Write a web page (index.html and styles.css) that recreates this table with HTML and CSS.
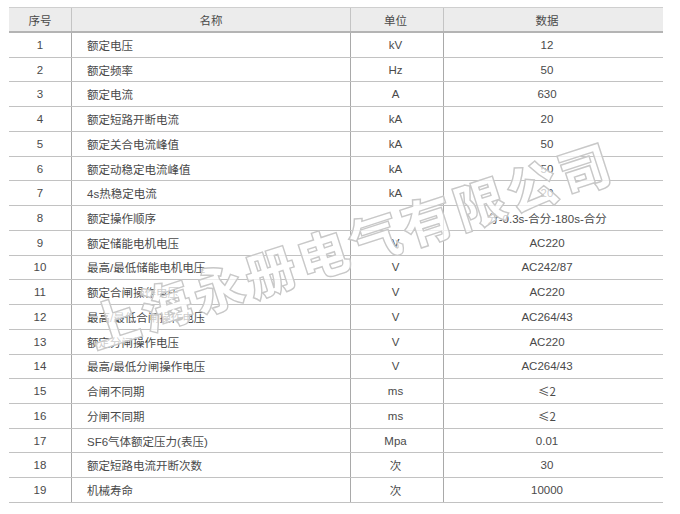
FILE: index.html
```html
<!DOCTYPE html>
<html lang="zh-CN">
<head>
<meta charset="utf-8">
<title>技术参数</title>
<link rel="stylesheet" href="styles.css">
</head>
<body>
<div class="page">
  <div class="table">
    <div class="row head">
      <div class="c seq">序号</div>
      <div class="c name center">名称</div>
      <div class="c unit">单位</div>
      <div class="c data">数据</div>
    </div>
    <div class="row"><div class="c seq">1</div><div class="c name">额定电压</div><div class="c unit">kV</div><div class="c data">12</div></div>
    <div class="row"><div class="c seq">2</div><div class="c name">额定频率</div><div class="c unit">Hz</div><div class="c data">50</div></div>
    <div class="row"><div class="c seq">3</div><div class="c name">额定电流</div><div class="c unit">A</div><div class="c data">630</div></div>
    <div class="row"><div class="c seq">4</div><div class="c name">额定短路开断电流</div><div class="c unit">kA</div><div class="c data">20</div></div>
    <div class="row"><div class="c seq">5</div><div class="c name">额定关合电流峰值</div><div class="c unit">kA</div><div class="c data">50</div></div>
    <div class="row"><div class="c seq">6</div><div class="c name">额定动稳定电流峰值</div><div class="c unit">kA</div><div class="c data">50</div></div>
    <div class="row"><div class="c seq">7</div><div class="c name">4s热稳定电流</div><div class="c unit">kA</div><div class="c data">20</div></div>
    <div class="row"><div class="c seq">8</div><div class="c name">额定操作顺序</div><div class="c unit"></div><div class="c data">分-0.3s-合分-180s-合分</div></div>
    <div class="row"><div class="c seq">9</div><div class="c name">额定储能电机电压</div><div class="c unit">V</div><div class="c data">AC220</div></div>
    <div class="row"><div class="c seq">10</div><div class="c name">最高/最低储能电机电压</div><div class="c unit">V</div><div class="c data">AC242/87</div></div>
    <div class="row"><div class="c seq">11</div><div class="c name">额定合闸操作电压</div><div class="c unit">V</div><div class="c data">AC220</div></div>
    <div class="row"><div class="c seq">12</div><div class="c name">最高/最低合闸操作电压</div><div class="c unit">V</div><div class="c data">AC264/43</div></div>
    <div class="row"><div class="c seq">13</div><div class="c name">额定分闸操作电压</div><div class="c unit">V</div><div class="c data">AC220</div></div>
    <div class="row"><div class="c seq">14</div><div class="c name">最高/最低分闸操作电压</div><div class="c unit">V</div><div class="c data">AC264/43</div></div>
    <div class="row"><div class="c seq">15</div><div class="c name">合闸不同期</div><div class="c unit">ms</div><div class="c data cjk">≤2</div></div>
    <div class="row"><div class="c seq">16</div><div class="c name">分闸不同期</div><div class="c unit">ms</div><div class="c data cjk">≤2</div></div>
    <div class="row"><div class="c seq">17</div><div class="c name">SF6气体额定压力(表压)</div><div class="c unit">Mpa</div><div class="c data">0.01</div></div>
    <div class="row"><div class="c seq">18</div><div class="c name">额定短路电流开断次数</div><div class="c unit">次</div><div class="c data">30</div></div>
    <div class="row"><div class="c seq">19</div><div class="c name">机械寿命</div><div class="c unit">次</div><div class="c data">10000</div></div>
  </div>
  <div class="watermark">上海永册电气有限公司</div>
</div>
</body>
</html>
```

FILE: styles.css
```css
html, body {
  margin: 0;
  padding: 0;
  background: #ffffff;
}

.page {
  position: relative;
  width: 680px;
  height: 514px;
  overflow: hidden;
  padding: 7px 0 0 9px;
  box-sizing: border-box;
  font-family: "Liberation Sans", "Noto Sans CJK SC", sans-serif;
  font-size: 11.5px;
  color: #4a4a4a;
}

.table {
  width: 654px;
}

.row {
  display: grid;
  grid-template-columns: 63px 279px 93px 219px;
  height: 24.74px;
  box-sizing: border-box;
  border-bottom: 1px solid #c2c2c2;
}

.row.head {
  height: 26px;
  background: #ececec;
  border-top: 1px solid #cfcfcf;
  border-bottom: 2px solid #b4b4b4;
}

.c {
  display: flex;
  align-items: center;
  justify-content: center;
  white-space: nowrap;
  border-right: 1px solid #a9a9a9;
}

.head .c {
  border-right-color: #c4c4c4;
}

.c.data {
  border-right: none;
  padding-right: 13px;
}

.c.cjk {
  font-family: "Noto Sans CJK SC", sans-serif;
}

.c.unit {
  padding-right: 3px;
}

.c.name {
  justify-content: flex-start;
  padding-left: 15px;
}

.c.name.center {
  justify-content: center;
  padding-left: 0;
}

.watermark {
  position: absolute;
  left: 350px;
  top: 243px;
  transform: translate(-50%, -50%) rotate(-18deg);
  font-family: "Noto Sans CJK SC", sans-serif;
  font-weight: 900;
  font-size: 51px;
  letter-spacing: 4px;
  white-space: nowrap;
  color: rgba(255, 255, 255, 0.72);
  -webkit-text-stroke: 1.4px #c8c8c8;
  pointer-events: none;
}
```
